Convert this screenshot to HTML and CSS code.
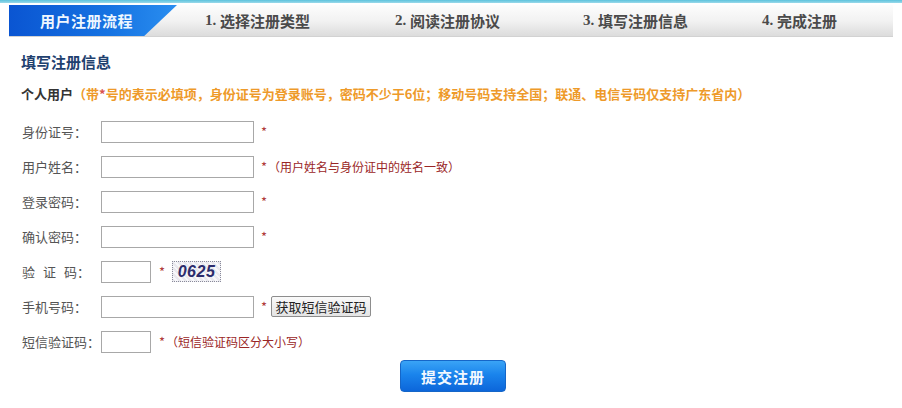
FILE: index.html
```html
<!DOCTYPE html>
<html lang="zh-CN">
<head>
<meta charset="utf-8">
<title>用户注册</title>
<link rel="stylesheet" href="styles.css">
</head>
<body>
<div class="topline"></div>
<div class="page">
  <div class="tabbar">
    <div class="tab-active">用户注册流程</div>
    <div class="step s1"><span class="num">1.</span>选择注册类型</div>
    <div class="step s2"><span class="num">2.</span>阅读注册协议</div>
    <div class="step s3"><span class="num">3.</span>填写注册信息</div>
    <div class="step s4"><span class="num">4.</span>完成注册</div>
  </div>
  <div class="content">
    <h2 class="title">填写注册信息</h2>
    <p class="subtitle">个人用户<span class="hint">（带<span class="star-o">*</span>号的表示必填项，身份证号为登录账号，密码不少于6位；移动号码支持全国；联通、电信号码仅支持广东省内）</span></p>
    <div class="form">
      <div class="row"><label class="lbl">身份证号：</label><input class="inp" type="text"><span class="star">*</span></div>
      <div class="row"><label class="lbl">用户姓名：</label><input class="inp" type="text"><span class="star">*</span><span class="note">（用户姓名与身份证中的姓名一致）</span></div>
      <div class="row"><label class="lbl">登录密码：</label><input class="inp" type="password"><span class="star">*</span></div>
      <div class="row"><label class="lbl">确认密码：</label><input class="inp" type="password"><span class="star">*</span></div>
      <div class="row"><label class="lbl spaced">验<span class="gap"></span>证<span class="gap"></span>码：</label><input class="inp short" type="text"><span class="star">*</span><span class="captcha">0625</span></div>
      <div class="row"><label class="lbl">手机号码：</label><input class="inp" type="text"><span class="star">*</span><button class="btn-sms" type="button">获取短信验证码</button></div>
      <div class="row"><label class="lbl">短信验证码：</label><input class="inp short" type="text"><span class="star narrow">*</span><span class="note">（短信验证码区分大小写）</span></div>
    </div>
    <div class="actions"><button class="btn-submit" type="button">提交注册</button></div>
  </div>
</div>
</body>
</html>
```
FILE: styles.css
```css
html, body {
  margin: 0;
  padding: 0;
  background: #fff;
  font-family: "Noto Sans CJK SC", "Liberation Sans", sans-serif;
  color: #444;
}
.topline {
  height: 3px;
  background: linear-gradient(#5cc3dd, #9ad9ea);
}
.page {
  padding: 2px 9px 0 9px;
}
.tabbar {
  display: flex;
  align-items: stretch;
  height: 31px;
  border-bottom: 1px solid #d2d2d2;
  background: linear-gradient(#fdfdfd 0%, #f2f2f2 50%, #dcdcdc 100%);
}
.tab-active {
  width: 168px;
  flex: none;
  clip-path: polygon(0 0, 100% 0, 80.5% 100%, 0 100%);
  background: linear-gradient(90deg, #0a55d2 0%, #1673e2 60%, #2a8ef0 100%);
  color: #eef7ff;
  font-size: 15px;
  font-weight: bold;
  display: flex;
  align-items: center;
  padding-left: 31px;
  box-sizing: border-box;
  letter-spacing: 0.5px;
}
.step {
  flex: none;
  display: flex;
  align-items: center;
  font-size: 15px;
  font-weight: bold;
  color: #4a4a4a;
}
.num {
  font-family: "Liberation Serif", serif;
  font-size: 15px;
  width: 15px;
}
.s1 { margin-left: 28px; width: 190px; }
.s2 { width: 188px; }
.s3 { width: 179px; }
.s4 { width: 120px; }
.content {
  padding-left: 12px;
}
.title {
  margin: 15px 0 0 0;
  font-size: 15px;
  line-height: 20px;
  font-weight: bold;
  color: #1f416f;
}
.subtitle {
  margin: 12px 0 0 0;
  font-size: 13px;
  line-height: 20px;
  font-weight: bold;
  color: #333;
}
.hint {
  color: #ee9a2a;
}
.star-o {
  color: #d9534f;
}
.form {
  margin-top: 10px;
  display: flex;
  flex-direction: column;
}
.row {
  display: flex;
  align-items: center;
  height: 35px;
}
.lbl {
  width: 80px;
  flex: none;
  font-size: 13px;
  color: #555;
  padding-left: 1px;
  box-sizing: border-box;
}
.gap {
  display: inline-block;
  width: 8px;
}
.inp {
  width: 153px;
  height: 22px;
  box-sizing: border-box;
  border: 1px solid #a8a8a8;
  background: #fff;
  margin: 0;
  padding: 0 3px;
}
.inp.short {
  width: 50px;
}
.star {
  color: #b03a3a;
  font-size: 13px;
  margin-left: 7px;
  width: 11px;
}
.star.narrow {
  margin-left: 6px;
}
.row .short + .star {
  margin-left: 8px;
}
.note {
  font-size: 12px;
  color: #9a2626;
  margin-left: -4px;
}
.captcha {
  margin-left: 2px;
  width: 49px;
  height: 21px;
  box-sizing: border-box;
  border: 1px dotted #8a8a9a;
  background: repeating-linear-gradient(45deg, #e9e9ee 0 2px, #f7f7fa 2px 4px);
  font-family: "Liberation Sans", sans-serif;
  font-style: italic;
  font-weight: bold;
  font-size: 16px;
  color: #2c2c6c;
  display: flex;
  align-items: center;
  justify-content: center;
  letter-spacing: 0.5px;
}
.btn-sms {
  margin-left: -1px;
  width: 100px;
  height: 21px;
  padding: 0;
  font-family: "Noto Sans CJK SC", sans-serif;
  font-size: 13px;
  color: #222;
  border: 1px solid #8d8d8d;
  border-radius: 2px;
  background: linear-gradient(#fafafa, #e4e4e4);
  line-height: 19px;
}
.actions {
  display: flex;
  justify-content: flex-start;
  padding-left: 379px;
  margin-top: 1px;
}
.btn-submit {
  width: 106px;
  height: 32px;
  border: 1px solid #1566c8;
  border-radius: 4px;
  background: linear-gradient(#3aa4f6 0%, #1a84ec 45%, #0c66da 100%);
  color: #f2f8ff;
  font-family: "Noto Sans CJK SC", sans-serif;
  font-size: 15px;
  font-weight: bold;
  letter-spacing: 1px;
  padding: 0;
}
```
